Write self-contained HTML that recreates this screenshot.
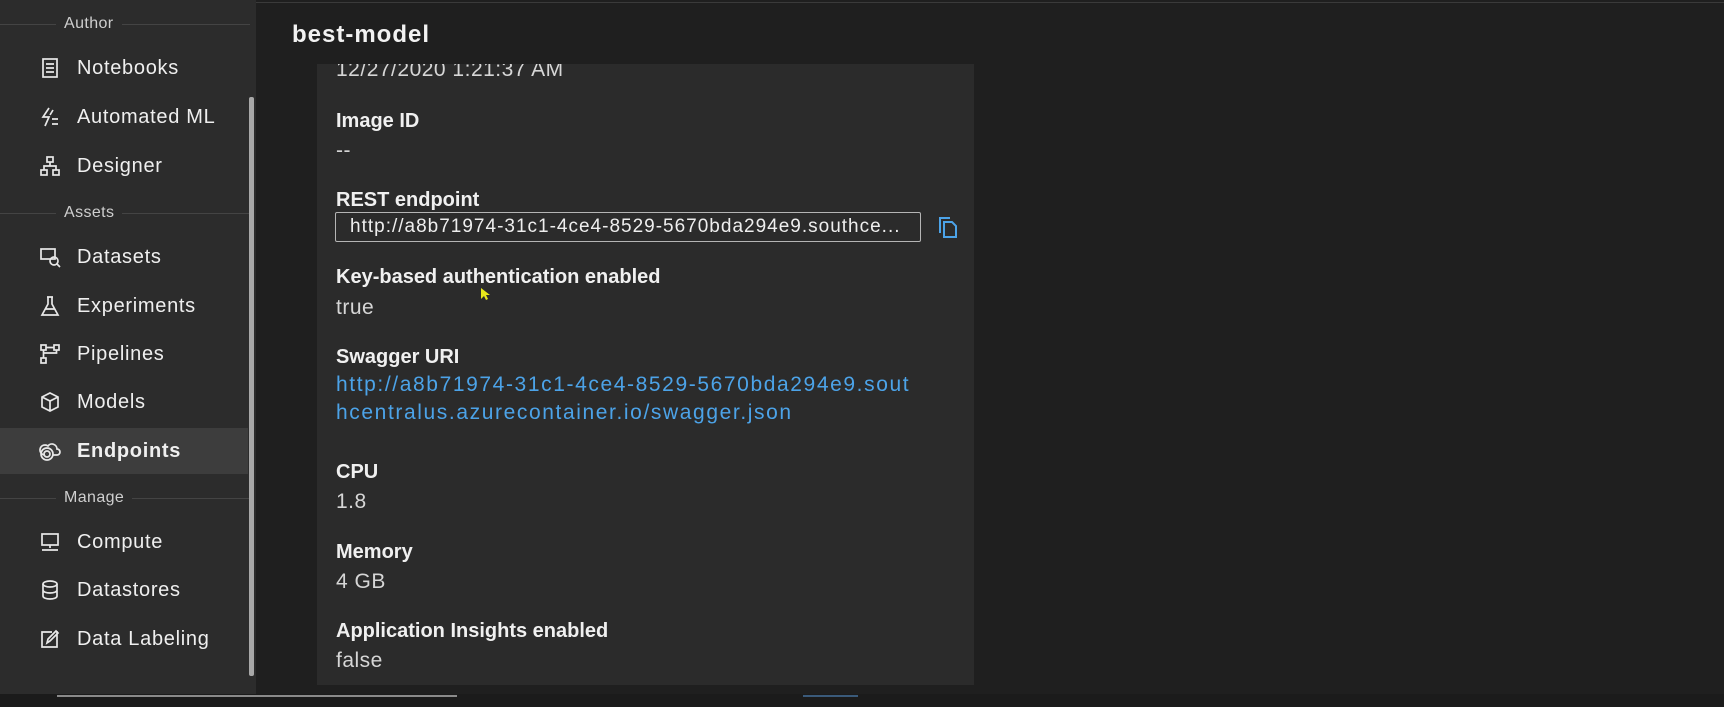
<!DOCTYPE html>
<html><head><meta charset="utf-8"><style>
*{margin:0;padding:0;box-sizing:border-box}
body{width:1724px;height:707px;overflow:hidden;background:#1f1f1f;font-family:"Liberation Sans",sans-serif;color:#e8e8e8;position:relative}
.side{position:absolute;left:0;top:0;width:256px;height:694px;background:#2c2c2c}
.topline{position:absolute;left:256px;right:0;top:2px;height:1px;background:#3a3a3a}
.sb{position:absolute;left:249px;top:97px;width:5px;height:579px;background:#a8a8a8;border-radius:2px}
.sec{position:absolute;left:0;width:250px;height:1px;background:#444}
.sec span{position:absolute;left:56px;top:-10px;background:#2c2c2c;padding:0 8px;font-size:16px;color:#cfcfcf;line-height:20px;letter-spacing:0.4px}
.it{position:absolute;left:0;width:248px;height:46px;font-size:20px;color:#efefef;line-height:46px;padding-left:77px;letter-spacing:0.7px}
.it svg{position:absolute;left:39px;top:12px;width:22px;height:22px;fill:none;stroke:#e8e8e8;stroke-width:1.7}
.it.act{background:#3d3d3d;font-weight:bold}
.title{position:absolute;left:292px;top:21px;font-size:24px;font-weight:bold;color:#f2f2f2;letter-spacing:1px}
.panel{position:absolute;left:317px;top:64px;width:657px;height:621px;background:#2b2b2b;overflow:hidden}
.t{position:absolute;left:19px;font-size:21px;white-space:nowrap}
.l{font-weight:bold;font-size:20px;color:#f0f0f0;margin-top:2px}
.v{color:#d6d6d6;letter-spacing:0.5px}
.a{color:#4ca3e8;letter-spacing:1.6px}
.box{position:absolute;left:18px;top:148px;width:586px;height:30px;border:1px solid #b5b5b5;border-radius:2px;font-size:19px;line-height:28px;padding-left:14px;color:#eee;letter-spacing:1px;white-space:nowrap;overflow:hidden}
.bot{position:absolute;left:0;top:694px;width:1724px;height:13px;background:#1b1b1b}
</style></head><body>
<div class="side">
<div class="sec" style="top:24px"><span>Author</span></div>
<div class="it" style="top:45px"><svg viewBox="0 0 22 22"><rect x="4" y="2" width="14" height="18"/><path d="M7 7h8M7 11h8M7 15h8"/></svg>Notebooks</div>
<div class="it" style="top:94px"><svg viewBox="0 0 22 22"><path d="M10 2L4 11h6l-4 9M14 4l-3 5M13 13h6M13 18h6"/></svg>Automated ML</div>
<div class="it" style="top:143px"><svg viewBox="0 0 22 22"><rect x="8" y="2" width="6" height="5"/><rect x="2" y="15" width="6" height="5"/><rect x="14" y="15" width="6" height="5"/><path d="M11 7v4M5 15v-4h12v4"/></svg>Designer</div>
<div class="sec" style="top:213px"><span>Assets</span></div>
<div class="it" style="top:234px"><svg viewBox="0 0 22 22"><rect x="2" y="3" width="14" height="10"/><circle cx="15" cy="15" r="4"/><path d="M18 18l3 3"/></svg>Datasets</div>
<div class="it" style="top:283px"><svg viewBox="0 0 22 22"><path d="M8 2h6M9 2v7L3 20h16L13 9V2M6 14h10"/></svg>Experiments</div>
<div class="it" style="top:331px"><svg viewBox="0 0 22 22"><rect x="2" y="2" width="5" height="5"/><rect x="15" y="2" width="5" height="5"/><rect x="2" y="15" width="5" height="5"/><path d="M4.5 7v8M7 4.5h8M17.5 7v3h-13"/></svg>Pipelines</div>
<div class="it" style="top:379px"><svg viewBox="0 0 22 22"><path d="M11 2l8 4v10l-8 4-8-4V6zM3 6l8 4 8-4M11 10v10"/></svg>Models</div>
<div class="it act" style="top:428px"><svg viewBox="0 0 22 22"><path d="M6 15a5 5 0 1 1 3-9 5 5 0 0 1 9 3 3 3 0 0 1 0 6h-4"/><circle cx="8" cy="14" r="3"/><circle cx="8" cy="14" r="6"/></svg>Endpoints</div>
<div class="sec" style="top:498px"><span>Manage</span></div>
<div class="it" style="top:519px"><svg viewBox="0 0 22 22"><rect x="3" y="3" width="16" height="11"/><path d="M11 14v3M3 19h16"/></svg>Compute</div>
<div class="it" style="top:567px"><svg viewBox="0 0 22 22"><ellipse cx="11" cy="5" rx="7" ry="3"/><path d="M4 5v12c0 4 14 4 14 0V5M4 11c0 4 14 4 14 0"/></svg>Datastores</div>
<div class="it" style="top:616px"><svg viewBox="0 0 22 22"><path d="M18 3v16H3V4h10M8 15l1-4 8-8 2 2-8 8z"/></svg>Data Labeling</div>
<div class="sb"></div>
</div>
<div class="topline"></div>
<div class="title">best-model</div>
<div class="panel">
<div class="t v" style="top:-6px">12/27/2020 1:21:37 AM</div>
<div class="t l" style="top:44px">Image ID</div>
<div class="t v" style="top:75px">--</div>
<div class="t l" style="top:123px">REST endpoint</div>
<div class="box">http://a8b71974-31c1-4ce4-8529-5670bda294e9.southce...</div>
<svg style="position:absolute;left:620px;top:151px" width="22" height="24" viewBox="0 0 22 24" fill="none" stroke="#4ca3e8" stroke-width="2"><path d="M3 18V3h10"/><path d="M7 7h8l4 4v11H7z"/></svg>
<div class="t l" style="top:200px">Key-based authentication enabled</div>
<div class="t v" style="top:232px">true</div>
<div class="t l" style="top:280px">Swagger URI</div>
<div class="t a" style="top:309px">http://a8b71974-31c1-4ce4-8529-5670bda294e9.sout</div>
<div class="t a" style="top:337px">hcentralus.azurecontainer.io/swagger.json</div>
<div class="t l" style="top:395px">CPU</div>
<div class="t v" style="top:426px">1.8</div>
<div class="t l" style="top:475px">Memory</div>
<div class="t v" style="top:506px">4 GB</div>
<div class="t l" style="top:554px">Application Insights enabled</div>
<div class="t v" style="top:585px">false</div>
<svg style="position:absolute;left:163px;top:223px" width="10" height="14" viewBox="0 0 10 14"><path d="M1 1v11l3-3 2 4 2-1-2-4h4z" fill="#e8e81a"/></svg>
</div>
<div class="bot"></div>
<div style="position:absolute;left:57px;top:695px;width:400px;height:2px;background:#8a8a8a"></div>
<div style="position:absolute;left:803px;top:695px;width:55px;height:2px;background:#3a5a7a"></div>
</body></html>
